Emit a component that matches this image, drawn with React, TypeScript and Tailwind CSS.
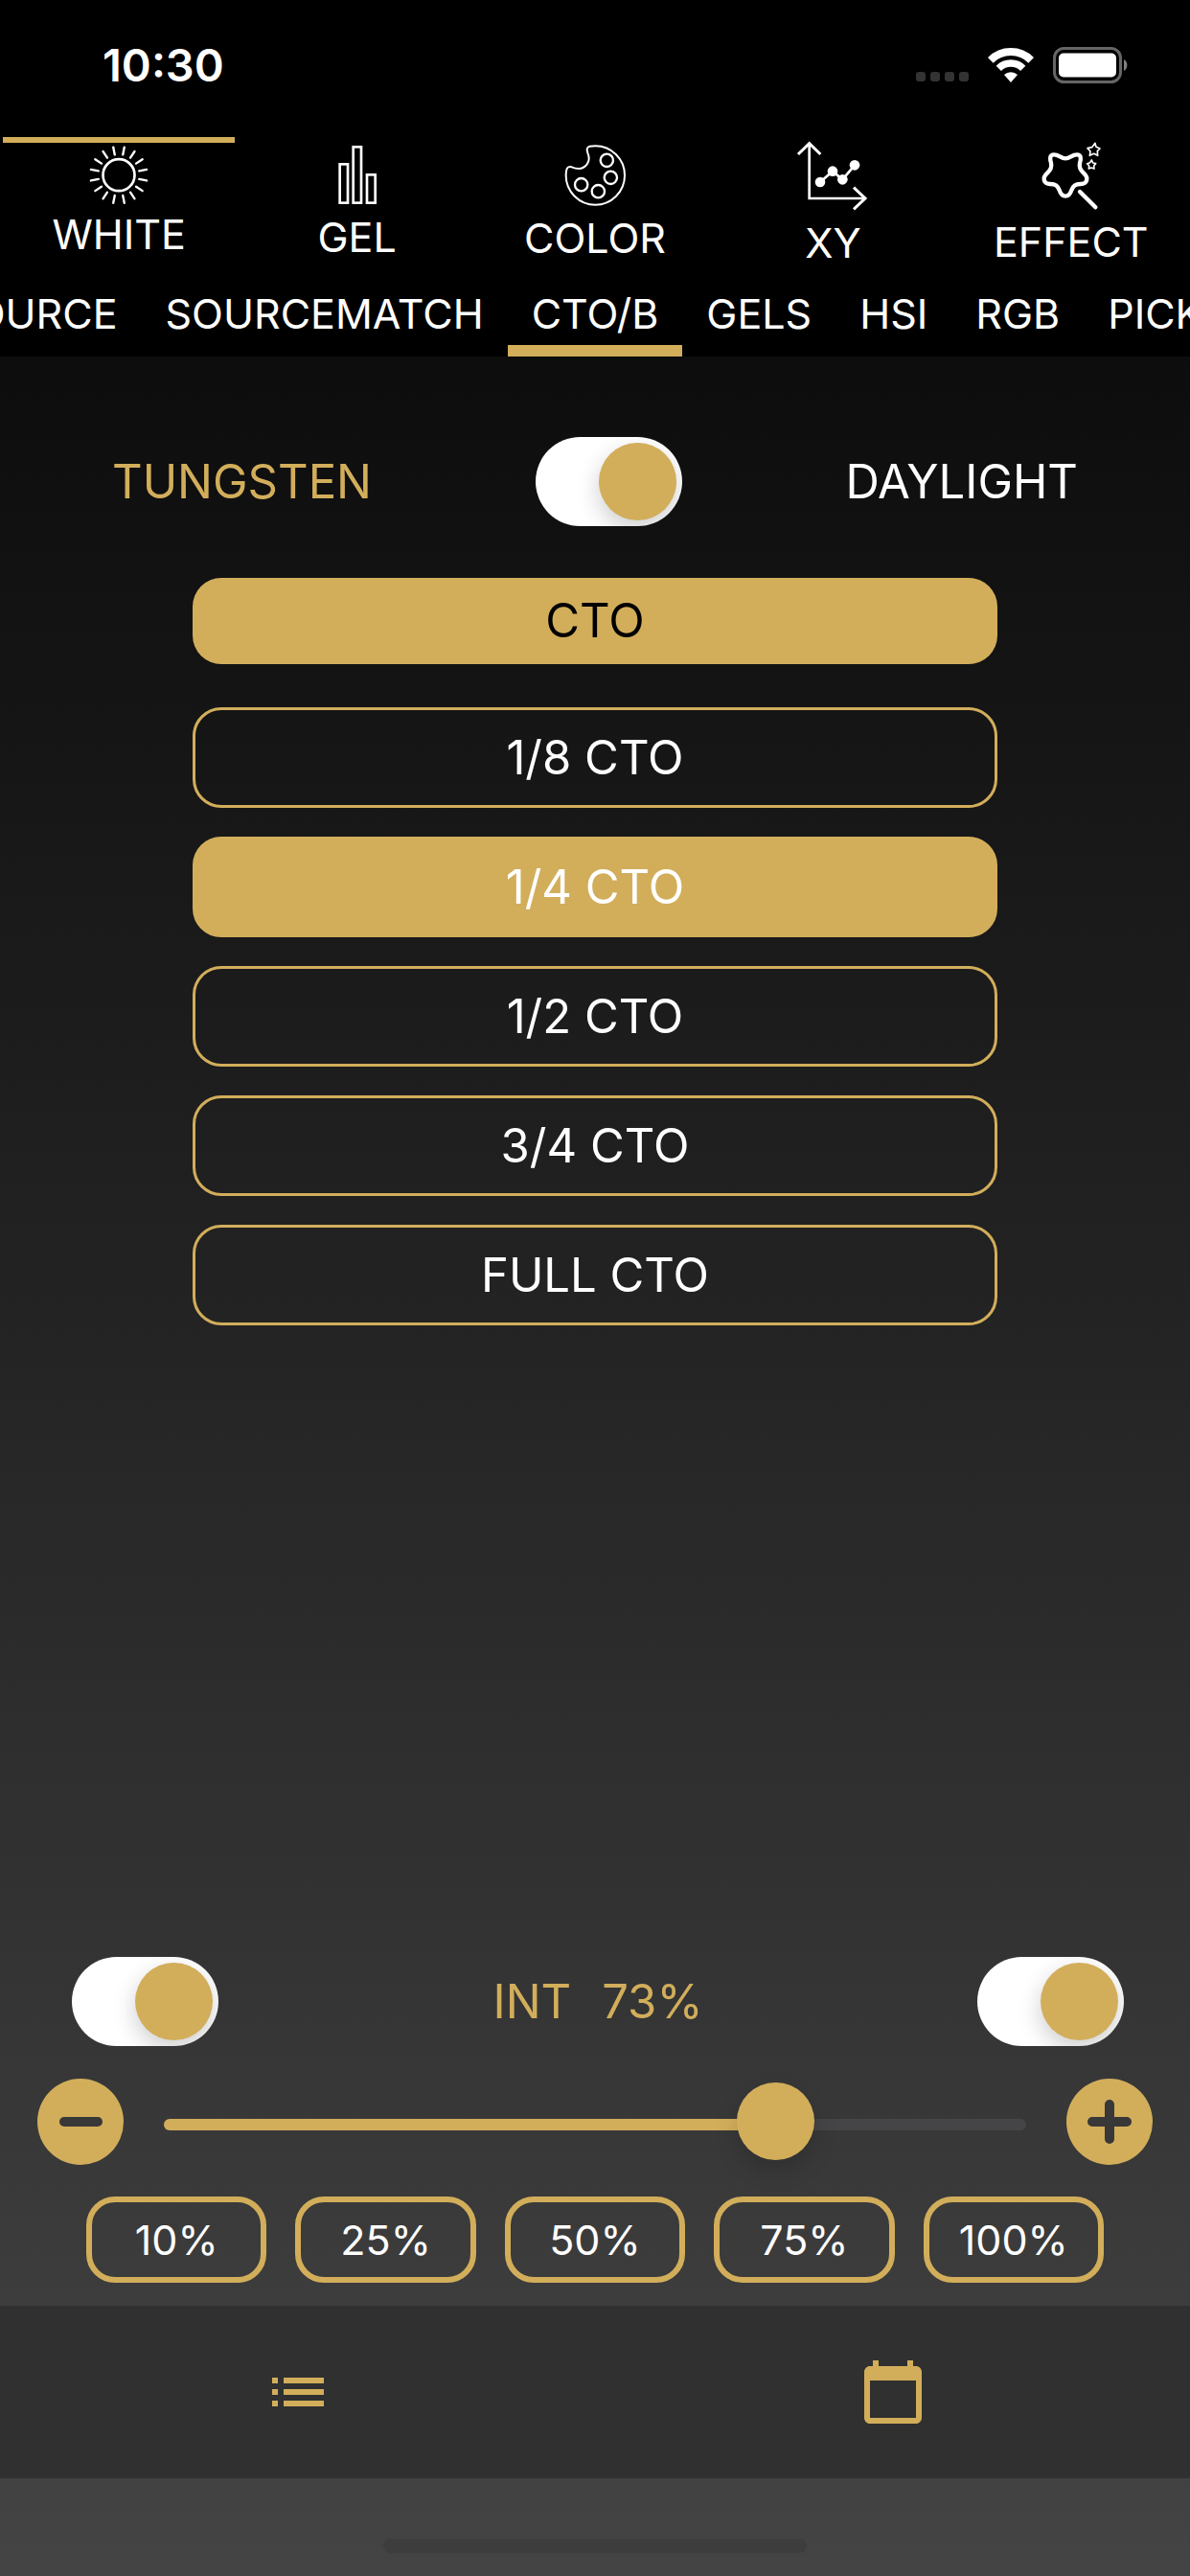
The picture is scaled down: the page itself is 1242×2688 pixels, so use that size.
import { useState, type CSSProperties, type ReactNode } from "react";

const FONT = "font-['Inter','Liberation_Sans',sans-serif]";

const RAYS = Array.from({ length: 16 }, (_, i) => ((11.25 + i * 22.5) * Math.PI) / 180);

function SunIcon() {
  return (
    <svg viewBox="67 57 252 204" className="h-[68px] w-[84px] overflow-visible" fill="none" stroke="white" aria-hidden="true">
      <circle cx="193" cy="158" r="49.5" strokeWidth="8" />
      {RAYS.map((a) => (
        <line
          key={a}
          x1={193 + 65 * Math.cos(a)}
          y1={158 + 65 * Math.sin(a)}
          x2={193 + 89 * Math.cos(a)}
          y2={158 + 89 * Math.sin(a)}
          strokeWidth="7"
          strokeLinecap="round"
        />
      ))}
    </svg>
  );
}

function BarsIcon() {
  return (
    <svg viewBox="812 57 252 213" className="h-[71px] w-[84px] overflow-visible" fill="none" stroke="white" strokeWidth="8" aria-hidden="true">
      <rect x="883" y="124" width="25" height="121" />
      <rect x="925" y="70" width="25" height="175" />
      <rect x="968" y="157" width="26" height="88" />
    </svg>
  );
}

function PaletteIcon() {
  return (
    <svg viewBox="57 57 252 216" className="h-[72px] w-[84px] overflow-visible" fill="none" stroke="white" strokeWidth="6" aria-hidden="true">
      <path d="M184 67 A92 92 0 1 1 92 159 C92 150 93 143 95 138 Q99 130 110 133 C130 141 148 138 158 124 C167 112 165 100 160 88 Q154 72 166 68 Q174 67 184 67Z" />
      <g strokeWidth="7">
        <circle cx="220" cy="112" r="20" />
        <circle cx="232" cy="166" r="20" />
        <circle cx="193" cy="209" r="20" />
        <circle cx="140" cy="188" r="20" />
      </g>
    </svg>
  );
}

function AxesIcon() {
  return (
    <svg viewBox="802 57 252 231" className="h-[77px] w-[84px] overflow-visible" fill="none" stroke="white" strokeWidth="8" aria-hidden="true">
      <path d="M855 60V231H1028" />
      <path d="M820 93 855 59 890 93M994 197 1030 231 994 265" strokeWidth="9" />
      <path d="M889 180 928 146 959 172 997 127" />
      <g fill="white" stroke="none">
        <circle cx="889" cy="180" r="16" />
        <circle cx="928" cy="146" r="16" />
        <circle cx="959" cy="172" r="16" />
        <circle cx="997" cy="127" r="16" />
      </g>
    </svg>
  );
}

function WandIcon() {
  return (
    <svg
      viewBox="227 57 252 228"
      className="h-[76px] w-[84px] overflow-visible"
      fill="none"
      stroke="white"
      strokeLinecap="round"
      strokeLinejoin="round"
      aria-hidden="true"
    >
      <path
        strokeWidth="13"
        d="M335 106C350 106 355 94 371 94C385 94 384 108 380 120C377 135 382 142 392 152C410 168 402 186 383 186C365 186 360 192 354 205C350 218 345 224 335 224C325 224 320 218 316 205C310 192 305 186 287 186C268 186 260 168 278 152C288 142 293 135 290 120C286 108 285 94 299 94C315 94 320 106 335 106Z"
      />
      <path strokeWidth="13" d="M380 210 429 259" />
      <path strokeWidth="5" d="M428 58 431 70 443 75 435 83 436 97 424 91 411 97 413 84 404 74 418 71Z" />
      <path strokeWidth="5" d="M417 111 421 120 430 122 424 129 425 138 416 135 408 138 409 129 403 122 412 119Z" />
    </svg>
  );
}

const MODES: { label: string; icon: ReactNode }[] = [
  { label: "WHITE", icon: <SunIcon /> },
  { label: "GEL", icon: <BarsIcon /> },
  { label: "COLOR", icon: <PaletteIcon /> },
  { label: "XY", icon: <AxesIcon /> },
  { label: "EFFECT", icon: <WandIcon /> },
];

function StatusBar() {
  return (
    <div className="flex h-[143px] items-center justify-between pb-2 pl-[107px] pr-16">
      <time className="text-[47px] font-semibold leading-[54px]">10:30</time>
      <div className="flex items-center">
        <div className="mr-5 mt-6 flex gap-[5px]" aria-hidden="true">
          <span className="size-2.5 rounded-[3px] bg-[#333333]" />
          <span className="size-2.5 rounded-[3px] bg-[#333333]" />
          <span className="size-2.5 rounded-[3px] bg-[#333333]" />
          <span className="size-2.5 rounded-[3px] bg-[#333333]" />
        </div>
        <svg viewBox="0 0 48 36" className="mr-5 h-9 w-12" fill="none" stroke="white" aria-hidden="true">
          <path d="M2.8 12.8A30 30 0 0 1 45.2 12.8" strokeWidth="8" />
          <path d="M11.3 21.3A18 18 0 0 1 36.7 21.3" strokeWidth="7.5" />
          <path d="M24 36 17 28A10 10 0 0 1 31 28Z" fill="white" stroke="none" />
        </svg>
        <svg viewBox="0 0 79 38" className="h-[38px] w-[79px]" fill="none" aria-hidden="true">
          <rect x="1.5" y="1.5" width="69" height="35" rx="10" stroke="#666666" strokeWidth="3" />
          <rect x="6" y="6.5" width="60" height="25" rx="5" fill="white" />
          <path d="M74 13a7 7 0 0 1 0 12z" fill="#808080" />
        </svg>
      </div>
    </div>
  );
}

function SubTab({ label, active = false }: { label: string; active?: boolean }) {
  return (
    <button
      type="button"
      className={`h-[90px] shrink-0 border-y-[12px] border-t-transparent px-[25px] text-[43px] leading-[54px] ${
        active ? "border-b-[#d2ae5b]" : "border-b-transparent"
      }`}
    >
      {label}
    </button>
  );
}

function Toggle({ label }: { label: string }) {
  return (
    <label className="relative block h-[93px] w-[153px] shrink-0 cursor-pointer overflow-hidden rounded-full bg-white">
      <input type="checkbox" role="switch" defaultChecked aria-label={label} className="peer sr-only" />
      <span className="absolute left-1.5 top-1.5 size-[81px] rounded-full bg-[#d2ae5b] shadow-[0_9px_24px_rgba(0,0,0,0.2)] peer-checked:left-[66px]" />
    </label>
  );
}

const STEPS = ["1/8 CTO", "1/4 CTO", "1/2 CTO", "3/4 CTO", "FULL CTO"];
const PRESETS = [10, 25, 50, 75, 100];

export default function App() {
  const [mode, setMode] = useState("WHITE");
  const [step, setStep] = useState("1/4 CTO");
  const [intensity, setIntensity] = useState(73);

  return (
    <div className={`flex min-h-screen flex-col overflow-hidden bg-linear-to-b from-[#060606] to-[#444444] text-white ${FONT}`}>
      <header className="bg-black">
        <StatusBar />
        <nav className="grid h-[139px] grid-cols-5" aria-label="Mode">
          {MODES.map(({ label, icon }) => (
            <button
              key={label}
              type="button"
              onClick={() => setMode(label)}
              className={`mx-[3px] flex flex-col items-center border-t-[6px] text-[43px] leading-[54px] ${
                mode === label ? "border-[#d2ae5b]" : "border-transparent"
              }`}
            >
              {icon}
              {label}
            </button>
          ))}
        </nav>
        <nav className="grid grid-cols-[minmax(0,1fr)_auto_minmax(0,1fr)]" aria-label="Source">
          <div className="flex justify-end overflow-hidden">
            <SubTab label="SOURCE" />
            <SubTab label="SOURCEMATCH" />
          </div>
          <SubTab label="CTO/B" active />
          <div className="flex overflow-hidden">
            <SubTab label="GELS" />
            <SubTab label="HSI" />
            <SubTab label="RGB" />
            <SubTab label="PICKER" />
          </div>
        </nav>
      </header>

      <main className="flex flex-1 flex-col">
        <div className="flex items-center justify-between px-[117px] pt-[84px] text-[49px] leading-[60px]">
          <span className="text-[#d2ae5b]">TUNGSTEN</span>
          <Toggle label="Tungsten or daylight" />
          <span>DAYLIGHT</span>
        </div>

        <div className="mx-auto mt-[54px] flex w-full max-w-[840px] flex-col text-[49px] leading-[60px]">
          <button type="button" className="h-[90px] rounded-[30px] bg-[#d2ae5b] text-black">
            CTO
          </button>
          <div className="mt-[45px] flex flex-col gap-[30px]">
            {STEPS.map((s) => (
              <button
                key={s}
                type="button"
                onClick={() => setStep(s)}
                className={`h-[105px] rounded-[30px] border-[3px] border-[#d2ae5b] ${step === s ? "bg-[#d2ae5b]" : ""}`}
              >
                {s}
              </button>
            ))}
          </div>
        </div>

        <section className="mt-auto pb-6" aria-label="Intensity">
          <div className="flex items-center justify-between pl-[75px] pr-[69px]">
            <Toggle label="Power" />
            <p className="flex gap-8 text-[49px] leading-[60px] text-[#d2ae5b]">
              <span>INT</span>
              <span>{intensity}%</span>
            </p>
            <Toggle label="Output" />
          </div>

          <div className="mt-[34px] flex items-center gap-[42px] px-[39px]">
            <button
              type="button"
              aria-label="Decrease"
              onClick={() => setIntensity(Math.max(0, intensity - 1))}
              className="flex size-[90px] shrink-0 items-center justify-center rounded-full bg-[#d2ae5b]"
            >
              <span className="h-2.5 w-[45px] rounded-full bg-[#383838]" />
            </button>
            <input
              type="range"
              min={0}
              max={100}
              value={intensity}
              onChange={(e) => setIntensity(Number(e.target.value))}
              aria-label="Intensity"
              style={{ "--level": `${intensity}%` } as CSSProperties}
              className="h-[90px] min-w-0 flex-1 appearance-none bg-transparent pt-1.5 [&::-webkit-slider-runnable-track]:h-3 [&::-webkit-slider-runnable-track]:rounded-full [&::-webkit-slider-runnable-track]:bg-[linear-gradient(to_right,#d2ae5b_var(--level),#454547_var(--level))] [&::-webkit-slider-thumb]:-mt-[38px] [&::-webkit-slider-thumb]:size-[81px] [&::-webkit-slider-thumb]:appearance-none [&::-webkit-slider-thumb]:rounded-full [&::-webkit-slider-thumb]:bg-[#d2ae5b] [&::-webkit-slider-thumb]:shadow-[0_12px_24px_rgba(0,0,0,0.15)]"
            />
            <button
              type="button"
              aria-label="Increase"
              onClick={() => setIntensity(Math.min(100, intensity + 1))}
              className="flex size-[90px] shrink-0 items-center justify-center rounded-full bg-[#d2ae5b]"
            >
              <svg viewBox="0 0 46 46" className="size-[46px]" stroke="#383838" strokeWidth="10" strokeLinecap="round" aria-hidden="true">
                <path d="M5 23H41M23 5V41" />
              </svg>
            </button>
          </div>

          <div className="mt-[33px] grid grid-cols-5 gap-[30px] px-[90px]">
            {PRESETS.map((p) => (
              <button
                key={p}
                type="button"
                onClick={() => setIntensity(p)}
                className="h-[90px] rounded-[30px] border-[6px] border-[#d2ae5b] text-[43px] leading-[54px]"
              >
                {p}%
              </button>
            ))}
          </div>
        </section>
      </main>

      <nav className="grid h-[180px] grid-cols-2 bg-[#303030] text-[#d2ae5b]" aria-label="Sections">
        <button type="button" aria-label="List" className="flex items-center justify-center">
          <svg viewBox="0 0 24 24" className="size-[72px]" fill="currentColor" aria-hidden="true">
            <path d="M3 13h2v-2H3v2zm0 4h2v-2H3v2zm0-8h2V7H3v2zm4 4h14v-2H7v2zm0 4h14v-2H7v2zM7 7v2h14V7H7z" />
          </svg>
        </button>
        <button type="button" aria-label="Calendar" className="flex items-center justify-center">
          <svg viewBox="0 0 24 24" className="size-[72px]" fill="currentColor" aria-hidden="true">
            <path d="M20 3h-1V1h-2v2H7V1H5v2H4c-1.1 0-2 .9-2 2v16c0 1.1.9 2 2 2h16c1.1 0 2-.9 2-2V5c0-1.1-.9-2-2-2zm0 18H4V8h16v13z" />
          </svg>
        </button>
      </nav>
      <footer className="flex h-[102px] items-end justify-center pb-6">
        <div className="h-[15px] w-[442px] rounded-full bg-[#3d3d3d]" />
      </footer>
    </div>
  );
}
